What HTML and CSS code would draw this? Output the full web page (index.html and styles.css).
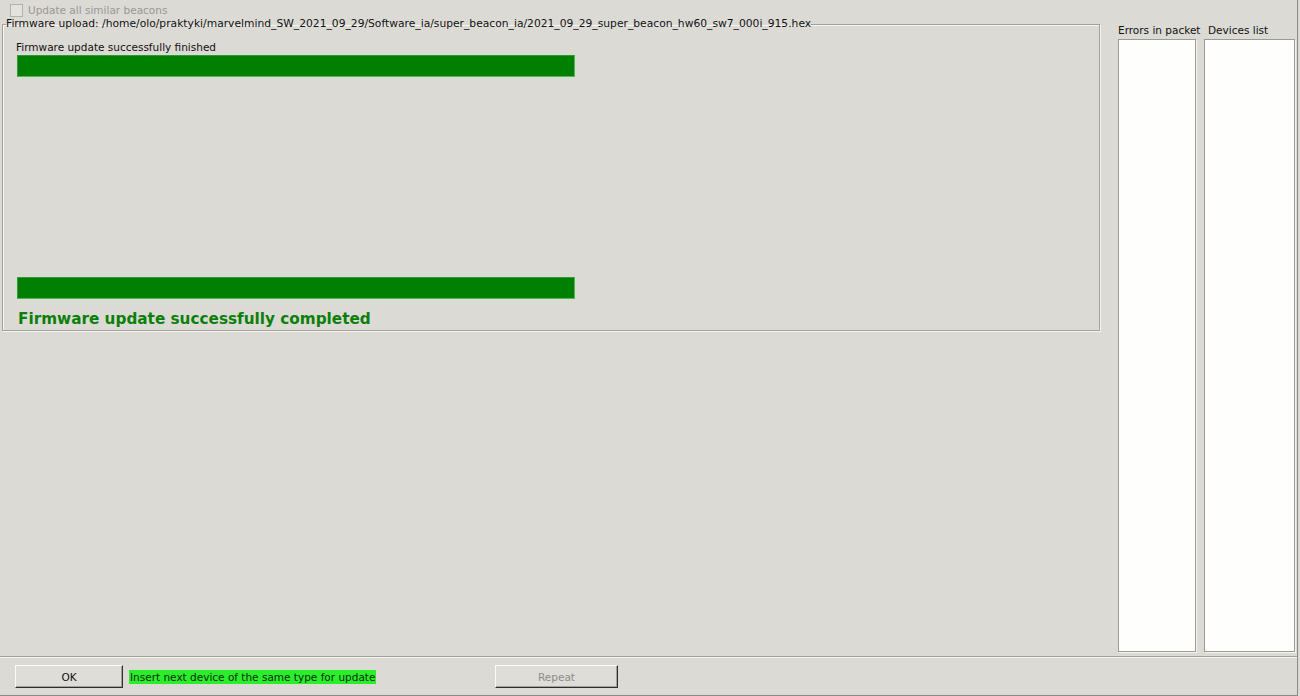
FILE: index.html
```html
<!DOCTYPE html>
<html>
<head>
<meta charset="utf-8">
<link rel="stylesheet" href="styles.css">
</head>
<body>
<div class="window">
  <div class="main">
    <div class="left">
      <div class="check-row">
        <span class="checkbox"></span>
        <span class="check-label">Update all similar beacons</span>
      </div>
      <fieldset class="group">
        <legend class="group-title">Firmware upload: /home/olo/praktyki/marvelmind_SW_2021_09_29/Software_ia/super_beacon_ia/2021_09_29_super_beacon_hw60_sw7_000i_915.hex</legend>
        <div class="status-label">Firmware update successfully finished</div>
        <div class="bar"></div>
        <div class="bar bar-second"></div>
        <div class="done">Firmware update successfully completed</div>
      </fieldset>
    </div>
    <div class="lists">
      <div class="list-col col-errors">
        <div class="list-label">Errors in packet</div>
        <div class="list-box"></div>
      </div>
      <div class="list-col col-devices">
        <div class="list-label">Devices list</div>
        <div class="list-box"></div>
      </div>
    </div>
  </div>
  <div class="bottom">
    <button class="btn btn-ok">OK</button>
    <span class="hint">Insert next device of the same type for update</span>
    <button class="btn btn-repeat" disabled>Repeat</button>
  </div>
</div>
</body>
</html>
```

FILE: styles.css
```css
html, body {
  margin: 0;
  padding: 0;
  background: #dcdad5;
}
body {
  font-family: "DejaVu Sans", sans-serif;
  font-size: 10.5px;
  color: #1a1a1a;
  width: 1300px;
  height: 696px;
  overflow: hidden;
}
.window {
  width: 1297px;
  height: 695px;
  border-right: 1px solid #8c8a86;
  border-bottom: 1px solid #8c8a86;
  display: flex;
  flex-direction: column;
}
.main {
  height: 656px;
  display: flex;
}
.left {
  width: 1100px;
  display: flex;
  flex-direction: column;
}
.check-row {
  height: 16px;
  padding-top: 2px;
  padding-left: 10px;
  display: flex;
  align-items: center;
}
.checkbox {
  width: 11px;
  height: 11px;
  border: 1px solid #b3b1ac;
  background: #e4e2de;
}
.check-label {
  margin-left: 5px;
  color: #9a9893;
  line-height: 13px;
}
.group {
  margin: 0 0 0 2px;
  width: 1098px;
  height: 313px;
  box-sizing: border-box;
  border: 1px solid #a3a19c;
  box-shadow: inset 1px 1px 0 #f6f5f3, 1px 1px 0 #f6f5f3;
  padding: 11px 14px 0 14px;
  min-width: 0;
}
.group-title {
  padding: 0;
  margin-left: -11px;
  line-height: 12px;
  font-size: 10.72px;
  color: #111;
}
.status-label {
  line-height: 13px;
  margin-left: -1px;
  color: #111;
}
.bar {
  margin-top: 1px;
  width: 558px;
  height: 22px;
  box-sizing: border-box;
  background: #007f00;
  border: 1px solid #4fb84f;
  border-top-color: #2e9a2e;
  border-left-color: #2e9a2e;
}
.bar-second {
  margin-top: 200px;
  height: 22px;
}
.done {
  margin-top: 11px;
  margin-left: 1px;
  font-weight: bold;
  font-size: 15.25px;
  line-height: 18px;
  color: #0a800a;
}
.lists {
  display: flex;
  gap: 8px;
  padding-left: 18px;
}
.list-col {
  display: flex;
  flex-direction: column;
}
.col-errors {
  width: 78px;
}
.col-devices {
  width: 91px;
}
.list-label {
  margin-top: 23px;
  line-height: 14px;
  white-space: nowrap;
  color: #111;
}
.col-devices .list-label {
  padding-left: 4px;
}
.list-box {
  margin-top: 2px;
  height: 613px;
  box-sizing: border-box;
  background: #fefefd;
  border: 1px solid #9c9a96;
  box-shadow: 1px 1px 0 #f4f3f1;
}
.bottom {
  flex: 1;
  border-top: 1px solid #a3a19c;
  box-shadow: inset 0 1px 0 #f6f5f3;
  display: flex;
  align-items: center;
  padding-left: 15px;
  padding-top: 1px;
  box-sizing: border-box;
}
.btn {
  font-family: "DejaVu Sans", sans-serif;
  font-size: 10.5px;
  height: 23px;
  box-sizing: border-box;
  background: #dfddd8;
  border: 1px solid;
  border-color: #fbfaf8 #2e2e2e #2e2e2e #fbfaf8;
  box-shadow: inset -1px -1px 0 #a3a19c;
  padding: 0;
  color: #111;
}
.btn-ok {
  width: 108px;
}
.hint {
  margin-left: 6px;
  background: #2bee2b;
  color: #0e2a0e;
  line-height: 14px;
  padding: 0 0 0 1px;
  width: 246px;
  white-space: nowrap;
}
.btn-repeat {
  margin-left: 119px;
  width: 123px;
  color: #8e8c88;
}
```
